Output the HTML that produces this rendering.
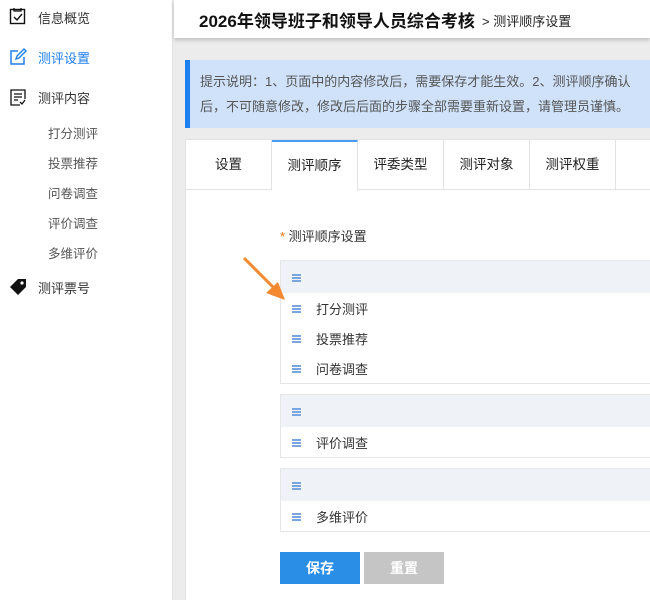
<!DOCTYPE html>
<html style="width:650px;height:600px;overflow:hidden"><head><meta charset="utf-8"><style>
*{margin:0;padding:0;box-sizing:border-box}
body{width:650px;height:600px;overflow:hidden;background:#ececec;font-family:"Liberation Sans","Noto Sans CJK SC",sans-serif;position:relative;font-size:13px;color:#333}
.side{position:absolute;left:0;top:0;width:173px;height:600px;background:#fff;border-right:1px solid #e2e2e2}
.mi{position:absolute;left:38px;font-size:13px;color:#333}
.si{position:absolute;left:48px;font-size:12.5px;color:#555}
.ic{position:absolute;left:9px}
.hdr{position:absolute;left:174px;top:0;width:476px;height:38px;background:#fff;box-shadow:0 2px 4px rgba(0,0,0,.2)}
.hdr b{position:absolute;left:25px;top:7px;font-size:17px;color:#111}
.hdr span{position:absolute;left:308px;top:11px;font-size:13px;color:#222}
.note{position:absolute;left:185px;top:60px;width:465px;height:68px;background:#cfe2fa;border-left:5px solid #1e7fef;padding:9px 0 0 10px;font-size:13px;line-height:25px;color:#555}
.panel{position:absolute;left:185px;top:139px;width:465px;height:461px;background:#fff;border-left:1px solid #e2e2e2;border-top:1px solid #e2e2e2}
.tabs{position:absolute;left:0;top:0;height:50px;width:465px;border-bottom:1px solid #e2e2e2}
.tab{position:absolute;top:0;height:50px;width:86px;border-right:1px solid #e2e2e2;text-align:center;line-height:50px;font-size:13.5px;color:#222}
.tab.a{border-top:2px solid #4a9cf0;height:51px;background:#fff;line-height:48px}
.lbl{position:absolute;left:280px;top:226px;font-size:13px;color:#333}
.lbl i{color:#f07000;font-style:normal}
.grp{position:absolute;left:280px;width:370px;border:1px solid #e6e6e6;border-right:none;background:#fff}
.gh{height:32px;background:#eff3f7;position:relative}
.row{height:30px;position:relative;font-size:13px;color:#333}
.row span{position:absolute;left:35px;top:6px}
.hm{position:absolute;left:11px;width:9px;height:8px;border-top:2px solid #7aa6e0;border-bottom:2px solid #7aa6e0}
.hm:after{content:"";position:absolute;left:0;right:0;top:1px;height:2px;background:#7aa6e0}
.gh .hm{top:13px}.row .hm{top:12px}
.btn{position:absolute;top:552px;height:32px;width:80px;color:#fff;font-weight:bold;font-size:14px;text-align:center;line-height:32px}
</style></head><body>
<div class="side">
<svg class="ic" style="top:7px" width="18" height="18" viewBox="0 0 18 18"><rect x="1.5" y="2.5" width="14" height="14" fill="none" stroke="#111" stroke-width="1.4"/><path d="M5 1v3h7V1" fill="none" stroke="#111" stroke-width="1.3"/><path d="M5 10l3 3 5-6" fill="none" stroke="#111" stroke-width="1.4"/></svg>
<div class="mi" style="top:8px">信息概览</div>
<svg class="ic" style="top:48px" width="18" height="18" viewBox="0 0 18 18"><path d="M9 3H2v13h13V9" fill="none" stroke="#1e7fef" stroke-width="1.5"/><path d="M7 11l1-3 7-7 2 2-7 7z" fill="none" stroke="#1e7fef" stroke-width="1.4"/></svg>
<div class="mi" style="top:48px;color:#1e7fef">测评设置</div>
<svg class="ic" style="top:88px" width="18" height="18" viewBox="0 0 18 18"><path d="M16 11V2H2v15h9" fill="none" stroke="#111" stroke-width="1.3"/><path d="M5 6h8M5 9h8M5 12h4M11 14l2 2 3-4" fill="none" stroke="#111" stroke-width="1.3"/></svg>
<div class="mi" style="top:88px">测评内容</div>
<div class="si" style="top:123px">打分测评</div>
<div class="si" style="top:153px">投票推荐</div>
<div class="si" style="top:183px">问卷调查</div>
<div class="si" style="top:213px">评价调查</div>
<div class="si" style="top:243px">多维评价</div>
<svg class="ic" style="top:278px" width="18" height="18" viewBox="0 0 18 18"><path d="M1 9L9 1h8v8l-8 8z" fill="#111"/><circle cx="13" cy="5" r="1.6" fill="#fff"/></svg>
<div class="mi" style="top:278px">测评票号</div>
</div>
<div class="hdr"><b>2026年领导班子和领导人员综合考核</b><span>&gt; 测评顺序设置</span></div>
<div class="note">提示说明：1、页面中的内容修改后，需要保存才能生效。2、测评顺序确认后，不可随意修改，修改后后面的步骤全部需要重新设置，请管理员谨慎。</div>
<div class="panel"><div class="tabs">
<div class="tab" style="left:0">设置</div>
<div class="tab a" style="left:86px">测评顺序</div>
<div class="tab" style="left:172px">评委类型</div>
<div class="tab" style="left:258px">测评对象</div>
<div class="tab" style="left:344px">测评权重</div>
</div></div>
<div class="lbl"><i>*</i> 测评顺序设置</div>
<div class="grp" style="top:260px"><div class="gh"><div class="hm"></div></div>
<div class="row"><div class="hm"></div><span>打分测评</span></div>
<div class="row"><div class="hm"></div><span>投票推荐</span></div>
<div class="row"><div class="hm"></div><span>问卷调查</span></div></div>
<div class="grp" style="top:394px"><div class="gh"><div class="hm"></div></div>
<div class="row"><div class="hm"></div><span>评价调查</span></div></div>
<div class="grp" style="top:468px"><div class="gh"><div class="hm"></div></div>
<div class="row"><div class="hm"></div><span>多维评价</span></div></div>
<div class="btn" style="left:280px;background:#2a8ee6">保存</div>
<div class="btn" style="left:364px;background:#c5c5c5">重置</div>
<svg style="position:absolute;left:240px;top:255px" width="50" height="50" viewBox="0 0 50 50"><path d="M4 3L38 37" stroke="#f5892f" stroke-width="3"/><path d="M45 45L26 38L38 27z" fill="#f5892f"/></svg>
</body></html>
